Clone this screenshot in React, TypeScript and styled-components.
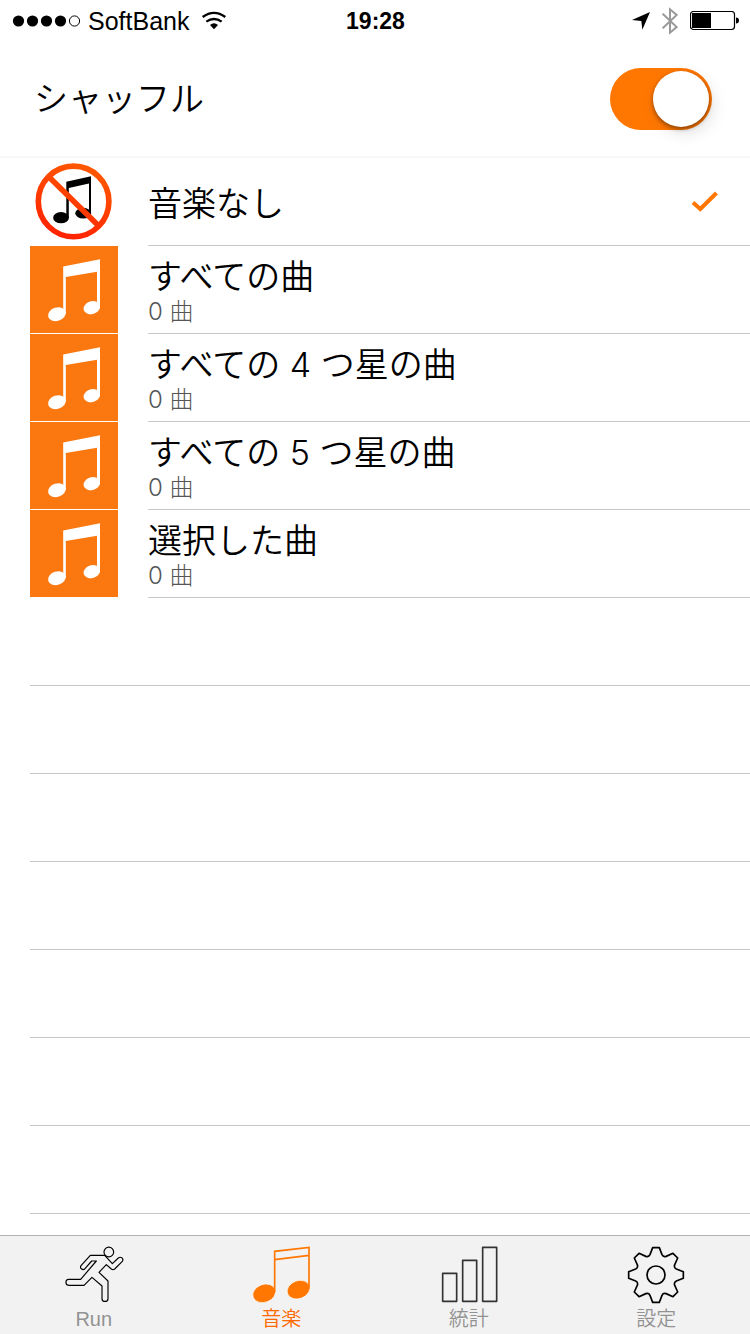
import React from "react";
import styled, { createGlobalStyle } from "styled-components";

const ORANGE = "#ff7700";
const LINE = "#c8c7cc";

const GlobalStyle = createGlobalStyle`
  * { box-sizing: border-box; }
  body {
    margin: 0;
    background: #fff;
    color: #000;
    font-family: Inter, "Noto Sans CJK JP", sans-serif;
    font-weight: 350;
  }
`;

const Screen = styled.div`
  display: flex;
  flex-direction: column;
  min-height: 100vh;
`;

const StatusBar = styled.header`
  display: grid;
  grid-template-columns: 1fr auto 1fr;
  align-items: center;
  height: 41px;
  padding: 0 11px 0 12px;
  font-family: "Liberation Sans", Arial, sans-serif;
  font-weight: 400;
`;

const StatusGroup = styled.div<{ $end?: boolean }>`
  display: flex;
  align-items: center;
  justify-content: ${(p) => (p.$end ? "flex-end" : "flex-start")};
  gap: ${(p) => (p.$end ? 12 : 7)}px;
`;

const Carrier = styled.span`
  font-size: 25px;
  line-height: 28px;
  margin-right: 5px;
`;

const Clock = styled.time`
  font-size: 23px;
  line-height: 28px;
  font-weight: 700;
`;

const ShuffleRow = styled.label`
  display: flex;
  align-items: center;
  justify-content: space-between;
  height: 117px;
  padding: 0 38px 0 34px;
  border-bottom: 2px solid #f7f7f7;
  font-size: 34px;
  line-height: 40px;
`;

const Switch = styled.input`
  appearance: none;
  flex: none;
  display: flex;
  justify-content: flex-start;
  width: 102px;
  height: 62px;
  margin: 0;
  padding: 3px;
  border-radius: 31px;
  background: #e5e5e5;
  &::before {
    content: "";
    width: 56px;
    height: 56px;
    border-radius: 50%;
    background: #fff;
    box-shadow: 0 2px 4px rgba(0, 0, 0, 0.4), 4px 6px 16px rgba(0, 0, 0, 0.12);
  }
  &:checked {
    justify-content: flex-end;
    background: ${ORANGE};
  }
`;

const List = styled.ul`
  flex: 1;
  margin: 0;
  padding: 0 0 0 30px;
  list-style: none;
`;

const Row = styled.li`
  height: 88px;
`;

const EmptyRow = styled(Row)`
  border-bottom: 1px solid ${LINE};
`;

const RowButton = styled.button`
  display: flex;
  gap: 30px;
  width: 100%;
  height: 100%;
  padding: 0;
  border: 0;
  background: none;
  color: inherit;
  font: inherit;
  text-align: left;
`;

const Art = styled.svg`
  flex: none;
  width: 88px;
  height: 87px;
`;

const RowBody = styled.span`
  flex: 1;
  display: flex;
  align-items: center;
  justify-content: space-between;
  padding-right: 30px;
  border-bottom: 1px solid ${LINE};
`;

const Labels = styled.span`
  display: flex;
  flex-direction: column;
  padding-top: 4px;
`;

const Title = styled.span`
  font-size: 34px;
  line-height: 40px;
`;

const Count = styled.span`
  color: #555;
  font-size: 24px;
  font-weight: 300;
  line-height: 30px;
`;

const TabBar = styled.nav`
  display: flex;
  height: 99px;
  border-top: 1px solid #b2b2b2;
  background: #f2f2f2;
`;

const Tab = styled.a<{ $active?: boolean }>`
  flex: 1;
  display: flex;
  flex-direction: column;
  align-items: center;
  padding-top: 9px;
  color: ${(p) => (p.$active ? "#ff6a00" : "#929292")};
  font-family: "Liberation Sans", "Noto Sans CJK JP", sans-serif;
  font-size: 20px;
  line-height: 29px;
  text-decoration: none;
`;

const TabIcon = styled.svg`
  flex: none;
  width: 60px;
  height: 60px;
  fill: none;
`;

const NoMusicArt = () => (
  <Art viewBox="0 0 88 87" aria-hidden="true">
    <defs>
      <linearGradient id="ban" gradientUnits="userSpaceOnUse" x1="30" y1="82" x2="58" y2="6">
        <stop offset="0" stopColor="#ff2000" />
        <stop offset="1" stopColor="#ff5a00" />
      </linearGradient>
    </defs>
    <path d="M36.3 23.7 61 18.3V57H59V25.4L38.8 30V60H36.3Z" />
    <ellipse cx="31" cy="59.7" rx="7.9" ry="5.6" />
    <ellipse cx="53.2" cy="55.2" rx="7.9" ry="5.4" />
    <g fill="none" stroke="url(#ban)">
      <circle cx="43.6" cy="43.4" r="35.3" strokeWidth="5.6" />
      <path d="M19.3 19.3 68.3 67.4" strokeWidth="5.6" />
    </g>
  </Art>
);

const NoteArt = () => (
  <Art viewBox="0 0 88 87" aria-hidden="true">
    <path fill="#fa780f" d="M0 0H88V87H0Z" />
    <g fill="#fff">
      <path d="M33.2 20.6 70 13.3V62H67V25.7L35.8 31V68H33.2Z" />
      <ellipse cx="26.9" cy="68.2" rx="9.1" ry="6.7" transform="rotate(-18 26.9 68.2)" />
      <ellipse cx="61.8" cy="61.7" rx="8.4" ry="6.4" transform="rotate(-18 61.8 61.7)" />
    </g>
  </Art>
);

const RunIcon = () => (
  <TabIcon viewBox="71 75 180 180" stroke="#000" strokeWidth="3.500" strokeLinejoin="round" aria-hidden="true">
    <circle cx="205.500" cy="96" r="14.500" />
    <path d="M150 106H193L216 131 234 114C242 108 251 116 246 124L223 147Q218 151 213 147L198 134 176 157 203 183V236C203 247 185 247 185 236V198L155 172 131 196H85C74 196 74 178 85 178H121L168 123H154L134 146C128 153 117 145 122 137Z" />
  </TabIcon>
);

const MusicIcon = () => (
  <TabIcon viewBox="634 75 180 180" aria-hidden="true">
    <g fill={ORANGE} stroke="#fff" strokeWidth="2">
      <ellipse cx="673.500" cy="220" rx="35" ry="27" transform="rotate(-20 673.500 220)" />
      <ellipse cx="776.500" cy="209" rx="35" ry="27" transform="rotate(-20 776.500 209)" />
    </g>
    <path stroke={ORANGE} strokeWidth="5" d="M705 216V94L808 82V206M705 119 808 106" />
  </TabIcon>
);

const StatsIcon = () => (
  <TabIcon viewBox="56 75 180 180" stroke="#333" strokeWidth="5" strokeLinejoin="round" aria-hidden="true">
    <path d="M67 160H109V244H67ZM127 121H169V244H127ZM187 82H229V244H187Z" />
  </TabIcon>
);

const TEETH = [0, 45, 90, 135, 180, 225, 270, 315];

const gearPath = () => {
  const at = (deg: number, x: number, y: number) => {
    const a = (deg * Math.PI) / 180;
    const px = x * Math.cos(a) - y * Math.sin(a);
    const py = x * Math.sin(a) + y * Math.cos(a);
    return `${px.toFixed(1)} ${py.toFixed(1)}`;
  };
  const parts = TEETH.map((deg) => {
    const start = deg === 0 ? `M${at(0, -18, -61)}` : "";
    return `${start}L${at(deg, -10, -82)}L${at(deg, 10, -82)}L${at(deg, 18, -61)}Q${at(deg, 22, -53)} ${at(deg + 45, -18, -61)}`;
  });
  return `${parts.join("")}Z`;
};

const GearIcon = () => (
  <TabIcon viewBox="-90 -90 180 180" stroke="#000" strokeWidth="5" strokeLinejoin="round" aria-hidden="true">
    <path d={gearPath()} />
    <circle r="27" />
  </TabIcon>
);

const SignalIcon = () => (
  <svg width="69" height="12" viewBox="0 0 69 12" role="img" aria-label="Signal">
    {[6, 20, 34, 48].map((x) => (
      <circle key={x} cx={x + 0.5} cy="6" r="5.600" />
    ))}
    <circle cx="62.500" cy="6" r="5.100" fill="none" stroke="#000" />
  </svg>
);

const WifiIcon = () => (
  <svg width="26" height="20" viewBox="0 0 78 60" role="img" aria-label="Wi-Fi">
    <g fill="none" stroke="#000" strokeWidth="7">
      <path d="M5 18Q39-7 73 18" />
      <path d="M16 32Q39 16 62 32" />
    </g>
    <path d="M27 42Q39 32 51 42L39 55Z" />
  </svg>
);

const LocationIcon = () => (
  <svg width="18" height="18" viewBox="0 0 54 54" role="img" aria-label="Location">
    <path d="M54 0 31 53 28 27 0 24Z" />
  </svg>
);

const BluetoothIcon = () => (
  <svg width="16" height="28" viewBox="0 0 48 84" role="img" aria-label="Bluetooth">
    <path fill="none" stroke="#999" strokeWidth="6" d="M2 20 44 60 24 77V7L44 24 2 64" />
  </svg>
);

const BatteryIcon = () => (
  <svg width="49" height="20" viewBox="0 0 49 20" role="img" aria-label="Battery">
    <rect x="0.500" y="0.500" width="44" height="18" rx="3" fill="none" stroke="#000" strokeWidth="1.200" />
    <path d="M2 2H21V17H2ZM46 6.500Q49 6.500 49 9.500T46 12.500Z" />
  </svg>
);

const CheckIcon = () => (
  <svg width="30" height="24" viewBox="0 0 30 24" role="img" aria-label="選択中">
    <path fill="none" stroke={ORANGE} strokeWidth="4" d="M3 12.500 10.300 19 26.500 3" />
  </svg>
);

const playlists = [
  { title: "音楽なし", selected: true },
  { title: "すべての曲", count: "0 曲" },
  { title: "すべての 4 つ星の曲", count: "0 曲" },
  { title: "すべての 5 つ星の曲", count: "0 曲" },
  { title: "選択した曲", count: "0 曲" },
];

const tabs = [
  { id: "run", label: "Run", Icon: RunIcon },
  { id: "music", label: "音楽", Icon: MusicIcon, active: true },
  { id: "stats", label: "統計", Icon: StatsIcon },
  { id: "settings", label: "設定", Icon: GearIcon },
];

const EMPTY_ROWS = 7;

export default function App() {
  return (
    <Screen lang="ja">
      <GlobalStyle />
      <StatusBar>
        <StatusGroup>
          <SignalIcon />
          <Carrier>SoftBank</Carrier>
          <WifiIcon />
        </StatusGroup>
        <Clock>19:28</Clock>
        <StatusGroup $end>
          <LocationIcon />
          <BluetoothIcon />
          <BatteryIcon />
        </StatusGroup>
      </StatusBar>
      <ShuffleRow>
        シャッフル
        <Switch type="checkbox" role="switch" defaultChecked />
      </ShuffleRow>
      <List>
        {playlists.map(({ title, count, selected }) => (
          <Row key={title}>
            <RowButton type="button" aria-pressed={!!selected}>
              {count ? <NoteArt /> : <NoMusicArt />}
              <RowBody>
                <Labels>
                  <Title>{title}</Title>
                  {count && <Count>{count}</Count>}
                </Labels>
                {selected && <CheckIcon />}
              </RowBody>
            </RowButton>
          </Row>
        ))}
        {Array.from({ length: EMPTY_ROWS }, (_, i) => (
          <EmptyRow key={i} aria-hidden="true" />
        ))}
      </List>
      <TabBar>
        {tabs.map(({ id, label, Icon, active }) => (
          <Tab key={id} href={`#${id}`} $active={active} aria-current={active ? "page" : undefined}>
            <Icon />
            {label}
          </Tab>
        ))}
      </TabBar>
    </Screen>
  );
}
